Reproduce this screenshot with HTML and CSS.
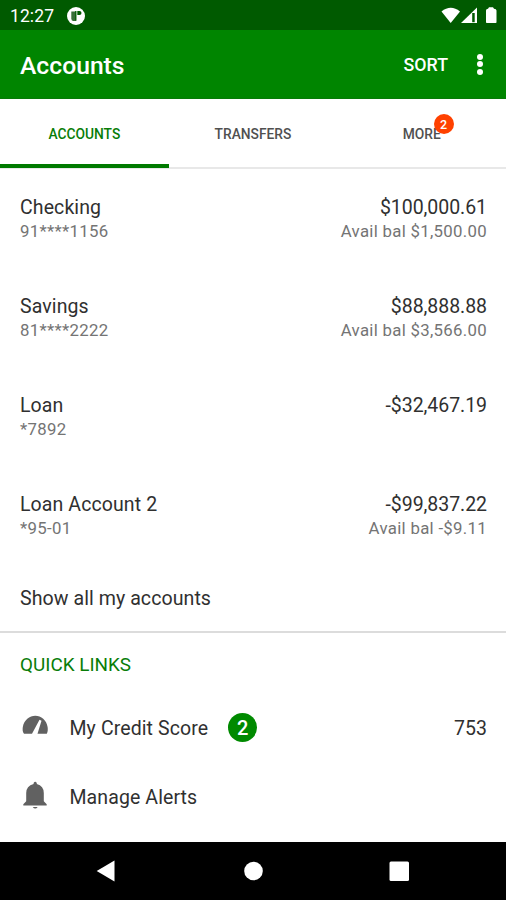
FILE: index.html
```html
<!DOCTYPE html>
<html lang="en">
<head>
<meta charset="utf-8">
<title>Accounts</title>
<link rel="stylesheet" href="styles.css">
</head>
<body>
<div class="screen">
  <div class="status-bar">
    <span class="clock">12:27</span>
    <svg class="notice" width="18" height="18" viewBox="0 0 18 18"><circle cx="9" cy="9" r="9" fill="#fff"/><path d="M4.300 4.500h4.500v9.500H6q-1.700-.5-1.700-2.500z" fill="#376f37"/><path d="M8.800 4v9.800" stroke="#005a00" stroke-width="1.300"/><path d="M10.300 4h2.200a2 2 0 1 1 0 4H10.300z" fill="#005a00"/></svg>
    <svg class="signals" width="57" height="17" viewBox="0 0 57 17"><path d="M.5 4.500Q9.700-3 19 4.500L9.700 16z" fill="#fff"/><path d="M36 .5V16H20z" fill="#fff"/><path d="M31.200 6v9.200h2.500V6z" fill="#005a00"/><path d="M45 3.500q0-1.700 2-1.700L48 .3h4l1 1.500q2.500 0 2.500 1.700V15.200q0 .8-.8.800H45.800q-.8 0-.8-.8z" fill="#fff"/></svg>
  </div>
  <header class="app-bar">
    <h1 class="title">Accounts</h1>
    <span class="sort">SORT</span>
    <span class="overflow"><i></i><i></i><i></i></span>
  </header>
  <nav class="tabs">
    <div class="tab tab-active">ACCOUNTS</div>
    <div class="tab">TRANSFERS</div>
    <div class="tab"><span class="tab-label">MORE<b class="tab-badge">2</b></span></div>
  </nav>
  <main>
    <section class="account"><div class="info"><p class="name">Checking</p><p class="sub number">91****1156</p></div><div class="info balance"><p class="amount">$100,000.61</p><p class="sub">Avail bal $1,500.00</p></div></section>
    <section class="account"><div class="info"><p class="name">Savings</p><p class="sub number">81****2222</p></div><div class="info balance"><p class="amount">$88,888.88</p><p class="sub">Avail bal $3,566.00</p></div></section>
    <section class="account"><div class="info"><p class="name">Loan</p><p class="sub number">*7892</p></div><div class="info balance"><p class="amount">-$32,467.19</p></div></section>
    <section class="account"><div class="info"><p class="name">Loan Account 2</p><p class="sub number">*95-01</p></div><div class="info balance"><p class="amount">-$99,837.22</p><p class="sub">Avail bal -$9.11</p></div></section>
    <div class="show-all">Show all my accounts</div>
    <h2 class="quick-title">QUICK LINKS</h2>
    <div class="link">
      <svg class="link-icon" width="27" height="28" viewBox="0 0 27 28"><path d="M2 21.800C.5 20 .5 17.500.8 15C2 8 7.500 3.700 13.300 3.700S24.600 8 25.600 15C26 17.500 25.800 20 24.800 21.800H15.500L19.500 8.800L17.500 7.800L10 21.800z" fill="#616161"/></svg>
      <span class="link-label">My Credit Score</span><b class="count">2</b><span class="score">753</span>
    </div>
    <div class="link">
      <svg class="link-icon" width="27" height="28" viewBox="0 0 27 28"><path d="M11.600 3V2Q13.200-.7 14.800 2V3Q21.800 5 21.800 12V20.300L24.700 23.300V24.500H1.300V23.300L4.200 20.300V12Q4.200 5 11.600 3zM10.700 26h5Q13.200 29 10.700 26z" fill="#616161"/></svg>
      <span class="link-label">Manage Alerts</span>
    </div>
  </main>
  <footer class="nav-bar">
    <svg class="nav-icon" width="24" height="24" viewBox="0 0 24 24"><path d="M2.700 12L20.500 1.500V22.500z" fill="#fff"/></svg>
    <svg class="nav-icon" width="24" height="24" viewBox="0 0 24 24"><circle cx="12.500" cy="12" r="9.300" fill="#fff"/></svg>
    <svg class="nav-icon" width="24" height="24" viewBox="0 0 24 24"><rect x="2.500" y="2.500" width="19.500" height="19.500" rx="1.500" fill="#fff"/></svg>
  </footer>
</div>
</body>
</html>
```
FILE: styles.css
```css
* { box-sizing: border-box; }
body { margin: 0; background: #fff; font-family: Roboto, sans-serif; color: #303030; }
p, h1, h2 { margin: 0; font-weight: 400; }
.screen { width: 506px; height: 900px; display: flex; flex-direction: column; overflow: hidden; }
.status-bar { height: 30px; flex: none; display: flex; align-items: center; padding: 1px 8px 0 10px; background: #005a00; color: #fff; }
.clock { width: 57px; font-size: 17.500px; letter-spacing: .1px; }
.signals { margin-left: auto; }
.app-bar { height: 69px; flex: none; display: flex; align-items: center; padding: 0 23px 0 20px; background: #008500; border-bottom: 1px solid #087a08; color: #fff; }
.title { flex: 1; padding-top: 3px; font-size: 24.700px; font-weight: 500; }
.sort { padding-top: 1px; font-size: 17.800px; font-weight: 500; }
.overflow { display: flex; flex-direction: column; gap: 1.500px; margin-left: 29px; }
.overflow i { width: 6px; height: 6px; border-radius: 50%; background: #fff; }
.tabs { height: 70px; flex: none; display: flex; border-bottom: 2px solid #e8e8e8; }
.tab { flex: 1; height: 69px; display: flex; align-items: center; justify-content: center; padding-top: 4px; border-bottom: 4px solid transparent; font-size: 13.800px; font-weight: 500; color: #505050; }
.tab-active { color: #087d08; border-bottom-color: #007a00; }
.tab-label { position: relative; }
.tab-badge { position: absolute; left: 31px; top: -12px; width: 20px; height: 20px; border-radius: 50%; background: #ff4100; color: #fff; font-size: 12.500px; font-weight: 500; line-height: 21px; text-align: center; }
main { flex: 1; }
.account { height: 99px; display: flex; justify-content: space-between; padding: 26px 19px 0 20px; }
.balance { text-align: right; }
.name { font-size: 19.500px; line-height: 25px; letter-spacing: .1px; }
.amount { font-size: 19.500px; line-height: 25px; letter-spacing: -.05px; }
.sub { font-size: 16.800px; line-height: 23px; letter-spacing: .3px; color: #747474; }
.show-all { height: 68px; display: flex; align-items: center; padding: 0 20px; border-bottom: 2px solid #dcdcdc; font-size: 19.600px; letter-spacing: .05px; }
.quick-title { height: 60px; padding: 0 20px; font-size: 18.900px; line-height: 63px; color: #087d08; }
.link { height: 69px; display: flex; align-items: center; padding: 0 19px 0 22px; font-size: 19.500px; letter-spacing: .1px; }
.link-icon { margin: 0 20.500px 3px 0; }
.link-label { padding-top: 1px; }
.count { width: 29px; height: 29px; margin: 0 0 1px 20px; border-radius: 50%; background: #008a00; color: #fff; font-size: 20px; font-weight: 500; line-height: 30px; text-align: center; }
.score { margin-left: auto; padding-top: 1px; letter-spacing: 0; }
.nav-bar { height: 58px; flex: none; display: flex; justify-content: space-between; align-items: center; padding: 0 95px 0 94px; background: #000; }
```
